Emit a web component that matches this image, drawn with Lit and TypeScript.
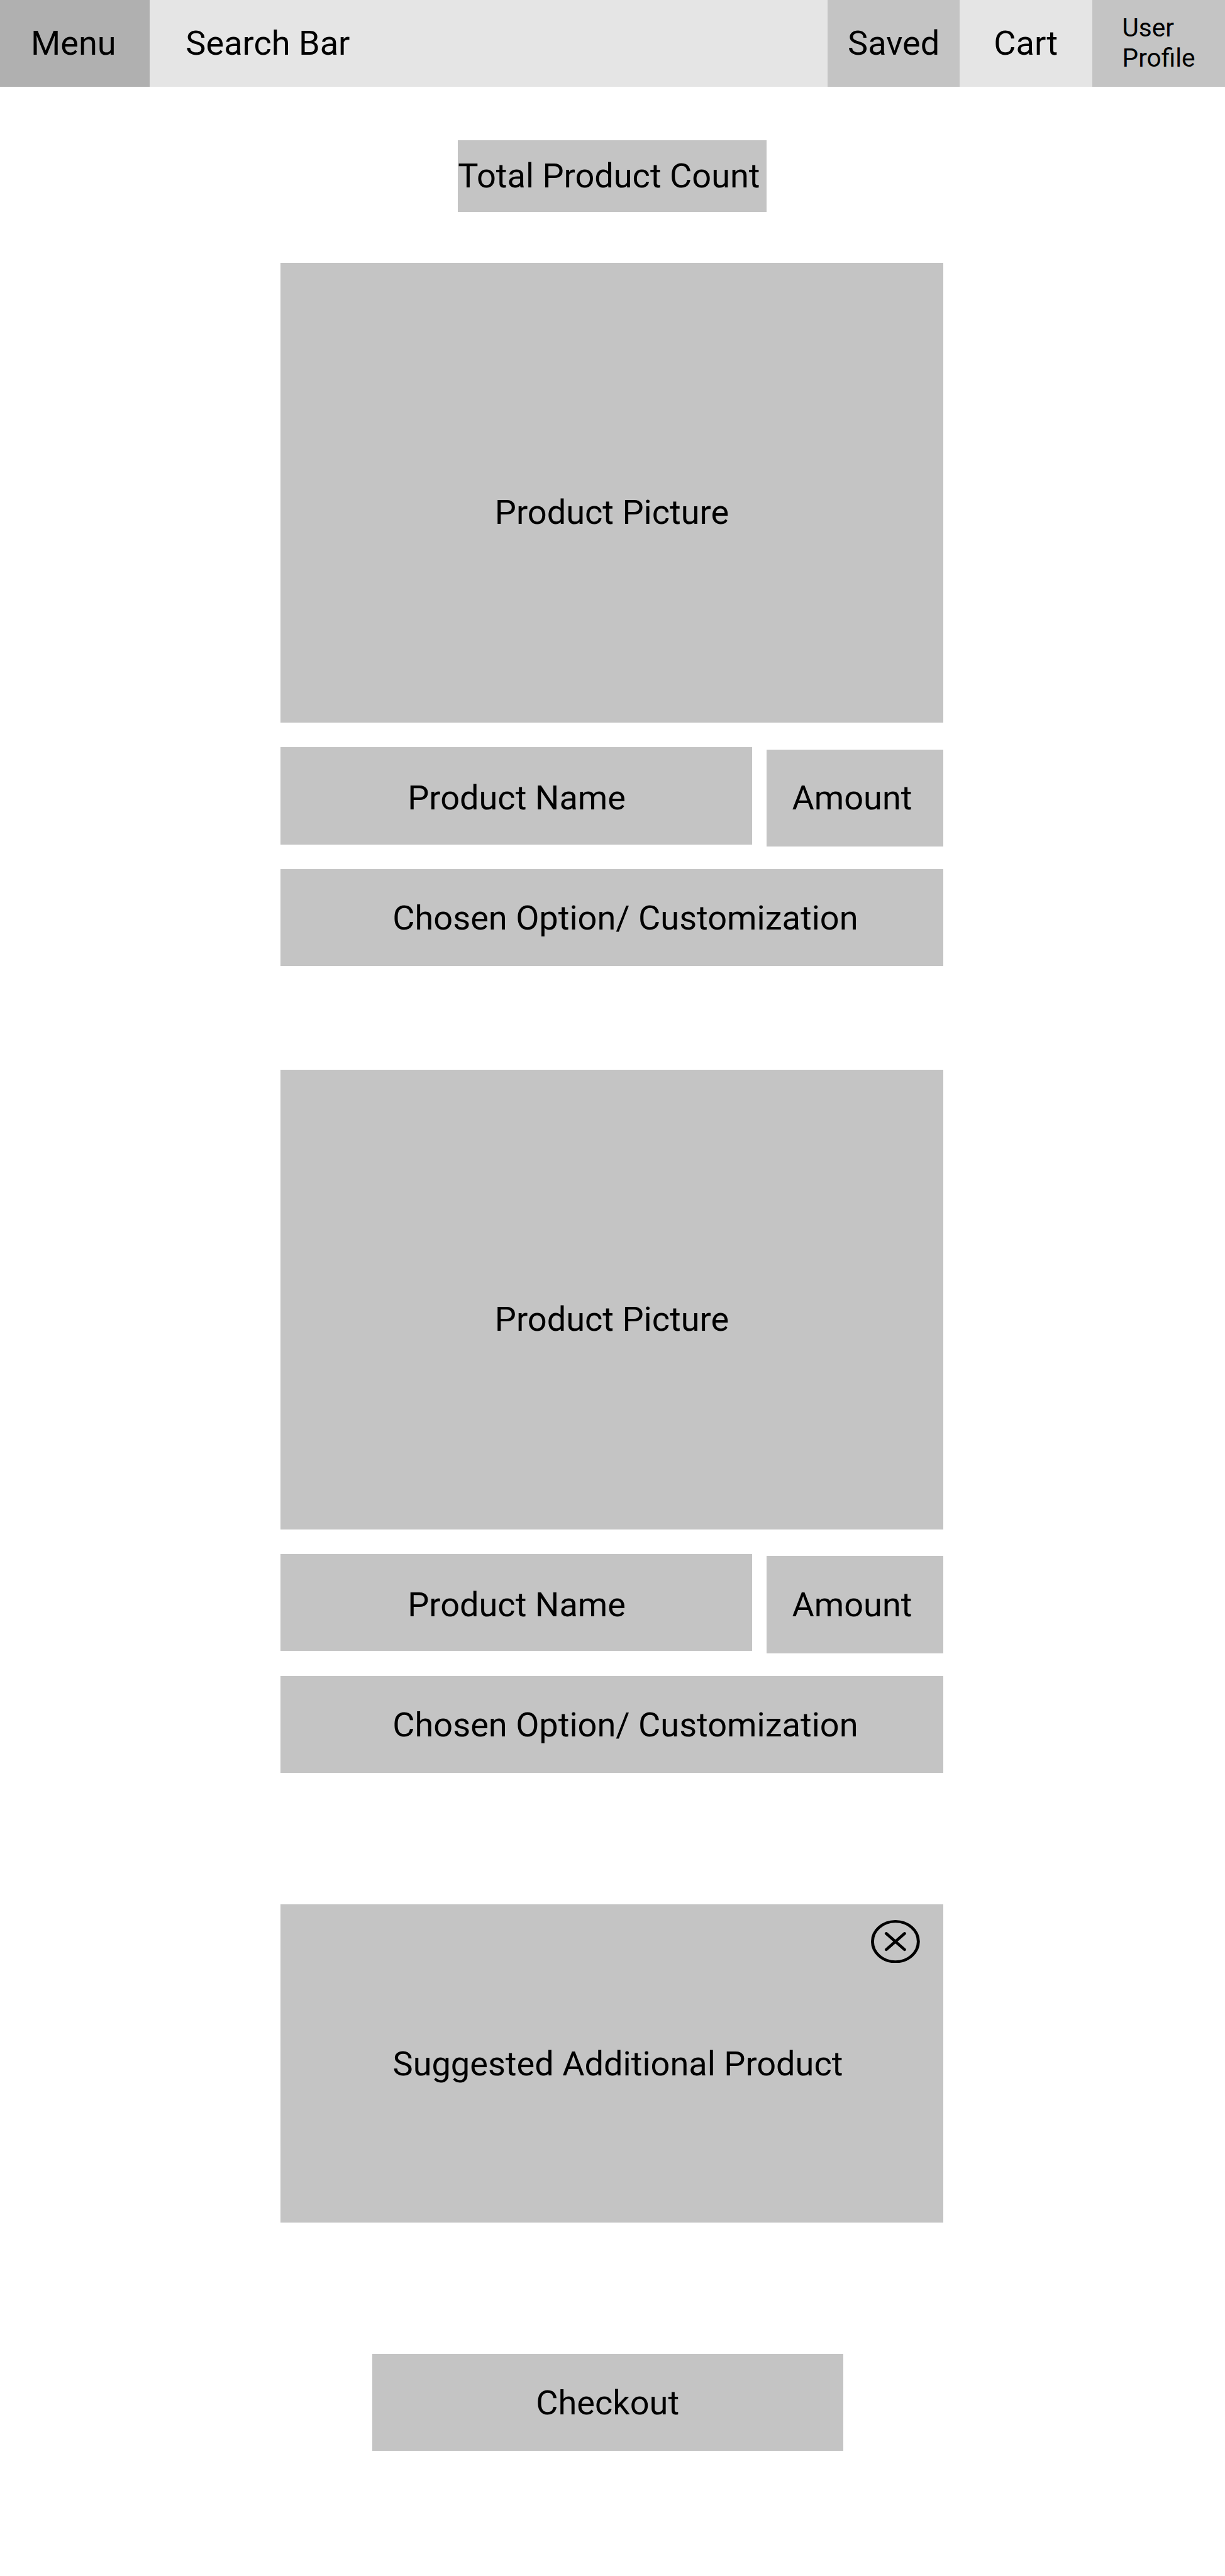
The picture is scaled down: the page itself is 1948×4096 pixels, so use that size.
import { LitElement, html, css } from "lit";
import { customElement } from "lit/decorators.js";

// Lengths are written in design units; --u is the size of one unit on screen.
const shared = css`
  :host {
    display: block;
    font-family: Roboto, "Liberation Sans", sans-serif;
    font-size: calc(96 * var(--u));
    line-height: calc(112.5 * var(--u));
    color: #000;
  }
  * {
    box-sizing: border-box;
  }
  .box {
    background: #c4c4c4;
    white-space: nowrap;
  }
`;

@customElement("top-bar")
export class TopBar extends LitElement {
  static styles = [
    shared,
    css`
      .bar {
        display: grid;
        grid-template-columns:
          calc(422 * var(--u)) 1fr repeat(3, calc(374 * var(--u)));
        height: calc(244 * var(--u));
        background: #e5e5e5;
        white-space: nowrap;
      }
      .bar > * {
        padding-top: calc(65.7 * var(--u));
      }
      .menu {
        background: #b0b0b0;
        padding-left: calc(87 * var(--u));
      }
      .search {
        padding-left: calc(102 * var(--u));
      }
      .saved {
        background: #c4c4c4;
        padding-left: calc(57.5 * var(--u));
      }
      .cart {
        padding-left: calc(95.5 * var(--u));
      }
      .bar > .profile {
        background: #c4c4c4;
        padding: calc(38 * var(--u)) 0 0 calc(84 * var(--u));
        font-size: calc(72 * var(--u));
        line-height: calc(84 * var(--u));
      }
    `,
  ];

  render() {
    return html`
      <nav class="bar">
        <div class="menu">Menu</div>
        <div class="search">Search Bar</div>
        <div class="saved">Saved</div>
        <div class="cart">Cart</div>
        <div class="profile">User<br />Profile</div>
      </nav>
    `;
  }
}

@customElement("cart-item")
export class CartItem extends LitElement {
  static styles = [
    shared,
    css`
      .picture {
        height: calc(1296 * var(--u));
        padding: calc(647.5 * var(--u)) 0 0 calc(604 * var(--u));
      }
      .row {
        display: flex;
        justify-content: space-between;
        align-items: flex-start;
        margin: calc(70 * var(--u)) 0 calc(64 * var(--u));
      }
      .name {
        width: calc(1330 * var(--u));
        height: calc(274 * var(--u));
        padding: calc(87.5 * var(--u)) 0 0 calc(358 * var(--u));
      }
      .amount {
        width: calc(500 * var(--u));
        height: calc(274 * var(--u));
        margin-top: calc(6 * var(--u));
        padding: calc(81.5 * var(--u)) 0 0 calc(72.5 * var(--u));
      }
      .option {
        height: calc(274 * var(--u));
        padding: calc(81.7 * var(--u)) 0 0 calc(315.7 * var(--u));
      }
    `,
  ];

  render() {
    return html`
      <div class="box picture">Product Picture</div>
      <div class="row">
        <div class="box name">Product Name</div>
        <div class="box amount">Amount</div>
      </div>
      <div class="box option">Chosen Option/ Customization</div>
    `;
  }
}

@customElement("app-root")
export class AppRoot extends LitElement {
  static styles = [
    shared,
    css`
      :host {
        --u: calc(1948px / 3456);
        width: 1948px;
        height: 4096px;
        background: #fff;
        overflow: hidden;
      }
      .content {
        display: flex;
        flex-direction: column;
        width: calc(1870 * var(--u));
        margin-left: calc(792 * var(--u));
      }
      .count {
        width: calc(870 * var(--u));
        height: calc(202 * var(--u));
        margin: calc(152 * var(--u)) 0 calc(144 * var(--u)) calc(500 * var(--u));
        padding-top: calc(43.7 * var(--u));
      }
      .items {
        display: grid;
        gap: calc(292 * var(--u));
      }
      .suggested {
        display: flex;
        justify-content: space-between;
        height: calc(898 * var(--u));
        margin-top: calc(370 * var(--u));
        padding: calc(44 * var(--u)) calc(66 * var(--u)) 0 calc(316 * var(--u));
      }
      .suggested-label {
        padding-top: calc(349.7 * var(--u));
      }
      .close {
        width: calc(138 * var(--u));
        height: calc(121.4 * var(--u));
        fill: none;
        stroke: #000;
        stroke-linecap: round;
      }
      .checkout {
        width: calc(1330 * var(--u));
        height: calc(274 * var(--u));
        margin: calc(370 * var(--u)) 0 0 calc(258 * var(--u));
        padding: calc(81.7 * var(--u)) 0 0 calc(462 * var(--u));
      }
    `,
  ];

  render() {
    return html`
      <top-bar></top-bar>
      <main class="content">
        <div class="box count">Total Product Count</div>
        <section class="items">
          <cart-item></cart-item>
          <cart-item></cart-item>
        </section>
        <section class="box suggested">
          <div class="suggested-label">Suggested Additional Product</div>
          <svg class="close" viewBox="0 0 16 16" preserveAspectRatio="none">
            <circle cx="8" cy="8" r="7.5" />
            <path d="M5 5 11 11M11 5 5 11" />
          </svg>
        </section>
        <div class="box checkout">Checkout</div>
      </main>
    `;
  }
}
